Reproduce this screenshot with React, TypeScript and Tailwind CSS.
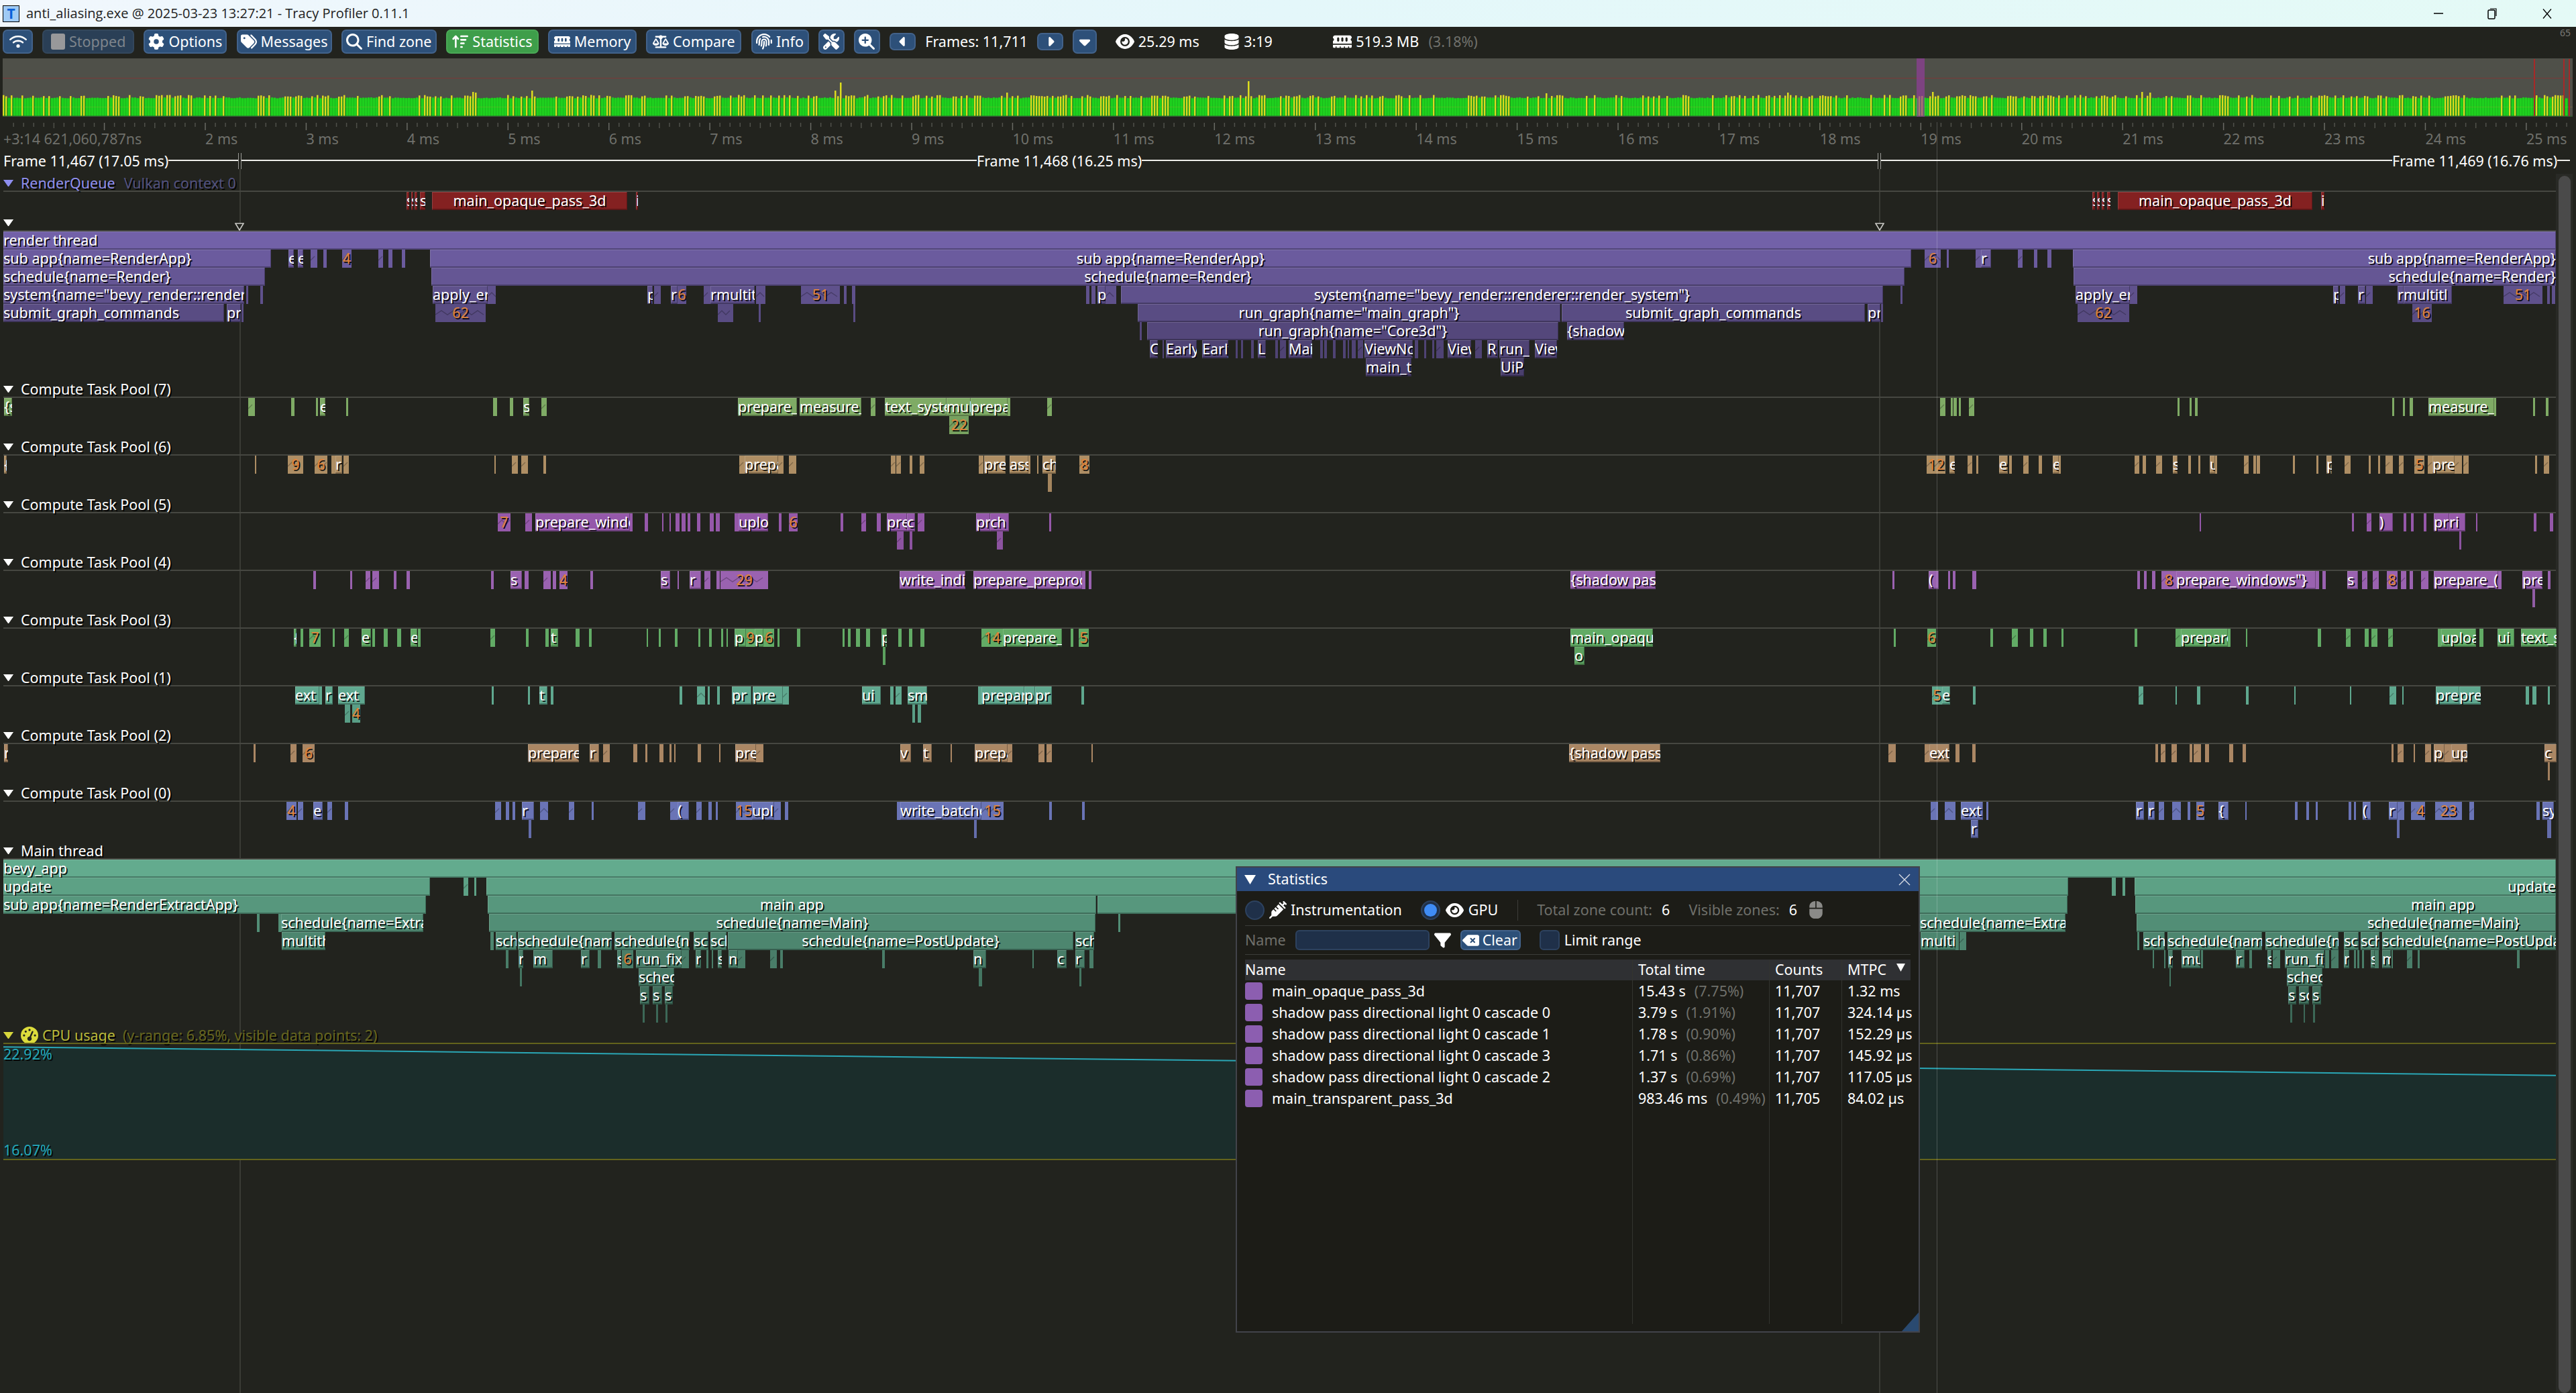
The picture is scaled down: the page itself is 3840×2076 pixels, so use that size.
// Tracy profiler window: statistics panel floating over a frame timeline.
import type { ReactNode } from "react";
import {
  FaWifi, FaGear, FaTags, FaMagnifyingGlass, FaArrowUpWideShort, FaMemory, FaScaleBalanced, FaFingerprint,
  FaScrewdriverWrench, FaMagnifyingGlassPlus, FaCaretLeft, FaCaretRight, FaCaretDown, FaEye, FaDatabase,
  FaSyringe, FaFilter, FaDeleteLeft, FaComputerMouse, FaGaugeHigh,
} from "react-icons/fa6";

const SHADOW = "[text-shadow:2px_2px_0_rgba(0,0,0,0.9)]";

type Zone = { x0: number; x1: number; label: string; align: string };

// each entry: "x0-x1[@align] label", entries split by |
function parse(s: string): Zone[] {
  return s.split("|").map((e) => {
    const m = e.match(/^(\d+)-(\d+)(?:@(\w+))? ?(.*)$/)!;
    return { x0: +m[1], x1: +m[2], align: m[3] ?? "", label: m[4] };
  });
}

function mix(hex: string, k: number) {
  const n = parseInt(hex.slice(1), 16);
  const c = [(n >> 16) & 255, (n >> 8) & 255, n & 255].map((v) => Math.round(v * k));
  return `rgb(${c[0]},${c[1]},${c[2]})`;
}

function ZoneBox({ z, color }: { z: Zone; color: string }) {
  const w = z.x1 - z.x0;
  const isNum = /^\d+$/.test(z.label);
  const folded = isNum || (!z.label && w < 120);
  const pts: string[] = [];
  if (folded && w >= 7) {
    const step = w > 40 ? 9 : 6;
    for (let i = 0, x = 0; x <= w; i++, x += step) pts.push(`${x},${i % 2 ? 10 : 16}`);
  }
  const justify = z.align === "c" || isNum ? "justify-center" : z.align === "r" ? "justify-end" : "justify-start";
  const offset = /^\d+$/.test(z.align) ? +z.align : 0;
  return (
    <div
      className={`absolute inset-y-0 flex overflow-hidden text-[21.5px] leading-[26px] ${justify} ${folded ? "" : "shadow-[inset_-1px_-2px_0_rgba(0,0,0,0.28),inset_1px_1px_0_rgba(255,255,255,0.14)]"}`}
      style={{ left: z.x0, width: w, background: color, paddingLeft: offset }}
    >
      {pts.length > 0 && (
        <svg className="absolute inset-0 h-full w-full">
          <polyline points={pts.join(" ")} fill="none" stroke="rgba(0,0,0,0.25)" strokeWidth="1.5" />
        </svg>
      )}
      {z.label && (
        <span className={`relative whitespace-nowrap ${SHADOW} ${isNum ? "text-[#e0843a]" : "text-white"}`}>{z.label}</span>
      )}
    </div>
  );
}

function Caret({ color = "#ffffff" }: { color?: string }) {
  return (
    <svg viewBox="0 0 15 10" className="ml-[5px] h-[10px] w-[15px] shrink-0">
      <polygon points="0.5,0 14.5,0 7.5,10" fill={color} stroke={color} strokeLinejoin="round" />
    </svg>
  );
}

function Track({ head, rows, base, step = 0.94 }: { head: ReactNode; rows: string[]; base: string; step?: number }) {
  return (
    <section className="pb-[5px]">
      <div className={`flex h-[25px] items-center gap-[11px] whitespace-nowrap pt-[3px] text-[21.5px] ${SHADOW}`}>{head}</div>
      <div className="ml-[5px] h-[2px] bg-[#464741]" />
      {rows.map((r, i) => (
        <div key={i} className="relative h-[27px]">
          {r &&
            parse(r).map((z, j) => <ZoneBox key={j} z={z} color={mix(base, Math.pow(step, i))} />)}
        </div>
      ))}
    </section>
  );
}

const RENDER_QUEUE =
  "606-610 s|613-616 s|618-622 s|626-634 s|644-935@c main_opaque_pass_3d|948-951 i|3119-3123 s|3126-3130 s|3133-3137 s|3141-3146 s|3157-3447@c main_opaque_pass_3d|3460-3465 i";

const RENDER_THREAD = [
  "5-3810 render thread",
  "5-404 sub app{name=RenderApp}|430-438 e|444-452 e|463-473|482-487|510-524 4|564-571|579-585|599-604|641-2849@c sub app{name=RenderApp}|2869-2893 6|2902-2905|2945-2953|2953-2968 r|3008-3015|3032-3037|3052-3058|3090-3810@r sub app{name=RenderApp}",
  "5-395 schedule{name=Render}|643-2839@c schedule{name=Render}|3091-3810@r schedule{name=Render}",
  '5-364 system{name="bevy_render::renderer::render_system"}|367-370|388-392|645-727 apply_er|727-739|965-973 p|975-985|1000-1010 r|1010-1023 6|1049-1059|1059-1125 rmultith|1127-1141|1194-1252 51|1258-1262|1270-1275|1619-1624|1627-1633|1636-1648 p|1648-1664|1671-2807@c system{name="bevy_render::renderer::render_system"}|2833-2836|3094-3175 apply_er|3175-3186|3478-3486 p|3488-3496|3515-3526 r|3527-3537|3574-3583 r|3583-3655 multitl|3732-3790 51|3797-3801|3804-3809',
  "5-334 submit_graph_commands|338-359 pr|360-363|649-724 62|1070-1093|1131-1134|1272-1275|1696-2326@c run_graph{name=\"main_graph\"}|2328-2780@c submit_graph_commands|2784-2803 pr|2804-2807|3097-3174 62|3596-3625 16",
  '1699-1702|1710-2323@c run_graph{name="Core3d"}|2336-2421 {shadow pass',
  "1714-1726 C|1733-1735|1738-1784 Early|1792-1831 Early|1842-1845|1850-1853|1865-1869|1875-1887 L|1901-1905|1908-1917|1921-1956 Main|1968-1972|1974-1978|1987-1991|2002-2006|2009-2011|2015-2021|2024-2032|2034-2106 ViewNode|2109-2114|2123-2126|2135-2138|2141-2152|2158-2193 View|2199-2209|2217-2233 R|2235-2280 run_g|2288-2321 View",
  "2036-2104 main_t|2237-2272 UiPass",
];

const POOLS: { name: string; base: string; rows: string[] }[] = [
  {
    name: "Compute Task Pool (7)",
    base: "#7fab65",
    rows: [
      "6-18 {s|370-380|434-439|471-474|477-485 e|516-519|735-741|760-765|780-789 s|807-815|1100-1188 prepare_|1192-1284 measure_|1298-1305|1319-1411 text_system|1411-1447 multi|1447-1502 prepare|1502-1506|1561-1568|2892-2900|2908-2911|2912-2917|2920-2923|2935-2943|3246-3249|3264-3267|3272-3276|3566-3569|3582-3585|3592-3597|3620-3718 measure_|3718-3721|3776-3779|3795-3799",
      "1415-1444 22",
    ],
  },
  {
    name: "Compute Task Pool (6)",
    base: "#ae8e64",
    rows: [
      "6-10 {|380-382|429-452 9|469-488 6|494-500|500-510 r|512-520|737-739|763-772|777-787|810-814|1102-1110|1110-1160 prepare|1160-1168|1176-1187|1328-1335|1336-1343|1356-1360|1371-1378|1459-1466|1467-1499 prepare|1505-1533 asset|1533-1536|1546-1548|1554-1574 check|1609-1624 8|2872-2900 12|2906-2914 e|2933-2940|2946-2949|2980-2993 e|2995-2999|3016-3024|3039-3044|3060-3069 e|3069-3072|3182-3189|3194-3199|3214-3223|3239-3246 s|3262-3266|3277-3280|3294-3302 u|3302-3305|3345-3352|3359-3363|3364-3369|3418-3421|3453-3456|3468-3476 p|3495-3504|3531-3534|3545-3548|3556-3567|3576-3583|3599-3614 5|3619-3626|3626-3659 prepare|3659-3670|3672-3680|3779-3782|3792-3800",
      "1562-1568",
    ],
  },
  {
    name: "Compute Task Pool (5)",
    base: "#9558aa",
    rows: [
      "742-761 7|783-793|798-939 prepare_windows|939-943|961-966|987-989|998-1000|1007-1013|1016-1022|1025-1029|1039-1044|1058-1064|1067-1073|1095-1101|1101-1145 upload|1161-1165|1176-1189 6|1253-1257|1284-1291|1307-1313|1322-1352 prepare|1352-1364 c|1368-1378|1455-1476 pr|1476-1504 ch|1564-1567|3279-3281|3506-3509|3528-3535|3547-3567 )|3583-3587|3594-3598|3613-3617|3628-3651 pr|3651-3675 ri|3691-3693|3777-3781|3801-3806",
      "1337-1347|1356-1360|1486-1495|3666-3669",
    ],
  },
  {
    name: "Compute Task Pool (4)",
    base: "#9a62b0",
    rows: [
      "467-471|522-525|545-552|555-565|587-591|606-611|732-736|761-778 s|782-788|810-821|824-829|834-846 4|880-884|985-999 s|1010-1012|1028-1045 r|1050-1059|1068-1073|1074-1145 29|1341-1439 write_indirect|1451-1613 prepare_preprocess|1613-1618|1623-1627|2341-2468 {shadow pass|2821-2824|2875-2890 (|2904-2907|2911-2915|2940-2946|3186-3190|3196-3200|3208-3213|3222-3244 8|3244-3452 prepare_windows\"}|3452-3457|3462-3467|3499-3515 s|3521-3529|3537-3546|3558-3574 8|3579-3587|3592-3597|3609-3620|3628-3724 prepare_(|3724-3729|3760-3790 prepare|3798-3802",
      "3775-3779",
    ],
  },
  {
    name: "Compute Task Pool (3)",
    base: "#62ab65",
    rows: [
      "438-442 {|448-452|461-478 7|496-499|513-520|539-553 e|555-559|572-578|592-598|612-622 e|623-627|731-738|784-788|813-818|821-832 t|858-864|878-882|964-966|982-985|1006-1010|1041-1044|1057-1061|1075-1078|1083-1085|1095-1112 p|1112-1125 9|1125-1138 p|1138-1154 6|1159-1162|1188-1193|1256-1259|1264-1268|1276-1282|1291-1297|1314-1322 p|1339-1344|1355-1360|1372-1378|1463-1495 14|1495-1583 prepare_|1596-1600|1608-1623 5|2341-2464 main_opaque|2823-2826|2873-2886 6|2967-2971|2999-3008|3026-3031|3046-3051|3073-3076|3182-3186|3243-3251|3251-3321 prepare|3321-3325|3348-3350|3455-3460|3497-3504|3525-3531|3535-3544|3560-3567|3634-3639|3639-3691 upload|3696-3702|3723-3748 ui|3758-3811 text_sys",
      "1316-1320|2347-2362 o",
    ],
  },
  {
    name: "Compute Task Pool (1)",
    base: "#5fa88f",
    rows: [
      "440-476 ext|476-480|485-496 r|504-544 ext|733-736|787-790|804-816 t|821-825|1013-1017|1039-1051|1055-1058|1069-1073|1091-1120 pr|1122-1167 pre|1167-1176|1285-1313 ui|1327-1332|1335-1344|1353-1382 sm|1458-1463|1463-1527 prepare|1527-1543 p|1543-1568 pr|1612-1616|2880-2895 5|2895-2907 e|2941-2945|3188-3195|3243-3245|3275-3280|3348-3352|3420-3422|3503-3505|3562-3572|3581-3583|3631-3666 prepare|3666-3698 prepare|3765-3770|3775-3781|3798-3801",
      "514-522|525-537 4|1360-1364|1368-1373",
    ],
  },
  {
    name: "Compute Task Pool (2)",
    base: "#ab8764",
    rows: [
      "6-12 r|378-381|433-442|451-469 6|787-863 prepare|879-893 r|899-909|944-950|962-965|983-989|998-1001|1005-1007|1040-1045|1072-1074|1096-1127 prepare|1127-1138|1342-1358 v|1376-1389 t|1417-1419|1453-1502 prepare|1502-1509|1548-1557|1560-1568|1627-1629|2339-2475 {shadow pass|2815-2826|2869-2876|2876-2906 ext|2915-2921|2940-2945|3213-3217|3221-3228|3237-3245|3264-3268|3270-3281|3287-3293|3323-3329|3343-3348|3565-3568|3574-3583|3598-3600|3615-3624|3628-3644 p|3644-3654|3654-3678 up|3793-3811 c",
      "3798-3801",
    ],
  },
  {
    name: "Compute Task Pool (0)",
    base: "#6a74b6",
    rows: [
      "427-442 4|444-452|467-481 e|488-495|514-519|738-747|754-759|764-768|778-796 r|805-817|848-856|882-885|951-962|999-1010|1010-1027 (|1038-1046|1056-1061|1067-1070|1097-1121 15|1121-1154 upload|1154-1164|1170-1175|1337-1342|1342-1463 write_batched|1463-1496 15|1564-1568|1613-1617|2878-2889|2899-2915|2923-2956 ext|2961-2964|3184-3196 r|3202-3212 r|3218-3226|3238-3251|3261-3265|3274-3286 5|3307-3322 {|3347-3349|3421-3425|3438-3442|3452-3455|3501-3505|3509-3512|3522-3534 (|3561-3574 r|3574-3584|3594-3602|3602-3615 4|3630-3670 23|3681-3688|3781-3786|3790-3807 sys",
      "788-792|1452-1456|2938-2949 r|3573-3577|3797-3803",
    ],
  },
];

const MAIN_THREAD = [
  "5-3810 bevy_app",
  "5-641 update|691-698|707-710|725-3083|3148-3154|3164-3168|3182-3810@r update",
  "5-635 sub app{name=RenderExtractApp}|727-1634@c main app|1636-3082|3183-3810@411 main app",
  "383-387|415-419|419-631 schedule{name=ExtractSchedule}|729-1633@c schedule{name=Main}|1667-1670|2862-3079 schedule{name=ExtractSchedule}|3185-3810@344 schedule{name=Main}",
  "420-485 multithreaded|731-736|739-770 schedule|772-912 schedule{name=|916-1028 schedule{name=|1034-1056 sch|1059-1083 sch|1085-1600@c schedule{name=PostUpdate}|1603-1631 schedule|2863-2915 multithreaded|2915-2920|2921-2931|3186-3189|3195-3227 schedule|3231-3372 schedule{name=|3377-3486 schedule{name=|3494-3516 sch|3519-3547 schedule|3551-3810 schedule{name=PostUpdate}",
  "754-758|773-780 r|795-824 m|866-879 r|891-896|920-926 s|927-944 6|948-1016 run_fixed|1016-1027|1037-1045 r|1053-1056|1061-1063|1070-1076 s|1086-1100 n|1100-1111|1148-1158|1163-1167|1315-1319|1451-1470 n|1539-1541|1576-1590 c|1603-1617 r|1624-1630|3209-3211|3226-3228|3232-3239 r|3252-3280 mu|3281-3284|3333-3346 r|3353-3357|3380-3386 s|3388-3399|3406-3465 run_fixed|3466-3472|3475-3486|3494-3502 r|3509-3512|3514-3517|3521-3524|3534-3540 s|3540-3546|3551-3564 m|3565-3567|3588-3596|3604-3607|3752-3756",
  "775-778|952-1005 schedule|1459-1464|1609-1612|3234-3236|3409-3462 schedule",
  "954-968 s|973-987 s|991-1003 s|3411-3423 s|3427-3442 sc|3447-3460 s",
  "958-961|978-981|992-995|3414-3417|3434-3436|3448-3451",
];

function FrameGraph() {
  // pseudo-random but stable column heights
  let seed = 7;
  const rnd = () => {
    seed = (seed * 16807) % 2147483647;
    return seed / 2147483647;
  };
  const spikes: Record<number, number> = { 1252: 123, 1244: 135, 792: 135, 704: 137, 708: 138, 1860: 121, 1500: 138, 2304: 139, 2880: 137, 3192: 137, 3204: 138, 2664: 138 };
  const bars = [];
  let yellow = false;
  for (let x = 4; x < 3826; x += 4) {
    yellow = rnd() < (yellow ? 0.42 : 0.38);
    const spike = spikes[x];
    const hi = yellow || spike;
    const top = spike ?? (yellow ? 144 - rnd() * 2.5 : 146.5 - rnd() * 1.5);
    bars.push(
      <rect key={x} x={x} y={top - 87} width={hi ? 2.5 : 3} height={173 - top} fill={hi ? "#dcdc1e" : "#1ed01e"} />,
      <rect key={`b${x}`} x={x + (hi ? 2.5 : 3)} y={146.5 - 87} width={hi ? 1.5 : 1} height={26.5} fill={hi ? "#18a018" : "#1bb81b"} />,
    );
  }
  return (
    <div className="h-[87px] pl-[4px] pr-[5px]">
      <svg viewBox="4 0 3831 87" className="block h-full w-full bg-[#4f5049]">
        <line x1="4" x2="3835" y1="29.5" y2="29.5" stroke="#7a3a38" strokeWidth="1" />
        {bars}
        <rect x="4" y="72" width="3831" height="1" fill="rgba(200,150,60,0.25)" />
        <rect x="4" y="85.5" width="3831" height="1.5" fill="#315c31" />
        <rect x="2857" y="0" width="12" height="87" fill="rgba(150,60,160,0.65)" />
        <rect x="3777" y="1" width="2" height="85" fill="#a82828" />
        <rect x="3821" y="1" width="2" height="85" fill="#a82828" />
        <rect x="3829" y="1" width="2" height="85" fill="#a82828" />
      </svg>
    </div>
  );
}

function Ruler() {
  const ms = (k: number) => 306 + (k - 2) * 150.43;
  const ticks = [];
  for (let i = 1; i < 255; i++) {
    const x = 5.14 + i * 15.043;
    const big = i % 10 === 0;
    ticks.push(<line key={i} x1={x} x2={x} y1="9" y2={big ? 20 : i % 5 === 0 ? 17 : 15} stroke={big ? "#6a6b65" : "#50514b"} strokeWidth="1.5" />);
  }
  const labels = [];
  for (let k = 2; k <= 25; k++) labels.push(k);
  return (
    <div className="relative h-[54px] text-[21.5px] leading-[28px] text-[#6f706b]">
      <svg className="absolute inset-0 h-full w-full">{ticks}</svg>
      <span className="absolute left-[5px] top-[19px] whitespace-nowrap">+3:14 621,060,787ns</span>
      {labels.map((k) => (
        <span key={k} className="absolute top-[19px] whitespace-nowrap" style={{ left: ms(k) }}>
          {k} ms
        </span>
      ))}
    </div>
  );
}

function FrameRow() {
  const label = "absolute top-0 whitespace-nowrap bg-[#22231e] text-[21.5px] leading-[24px] text-white";
  return (
    <div className="relative h-[24px]">
      <div className="absolute left-[5px] top-[10px] h-[2px] w-[3826px] bg-[#eeeeea]" />
      <div className="absolute left-[355px] top-0 h-[24px] w-[5px] border-x border-[#9a9a96] bg-[#22231e]" />
      <div className="absolute left-[2799px] top-0 h-[24px] w-[5px] border-x border-[#9a9a96] bg-[#22231e]" />
      <span className={`${label} left-[5px]`}>Frame 11,467 (17.05 ms)</span>
      <span className={`${label} left-[1456px]`}>Frame 11,468 (16.25 ms)</span>
      <span className={`${label} left-[3566px]`}>Frame 11,469 (16.76 ms)</span>
    </div>
  );
}

function Marker({ x }: { x: string }) {
  return (
    <svg viewBox="0 0 14 12" className={`absolute top-[332px] h-[12px] w-[14px] ${x}`}>
      <polygon points="1,1 13,1 7,11" fill="#22231e" stroke="#c8c8c4" strokeWidth="1.6" />
    </svg>
  );
}

function CpuPlot() {
  return (
    <section>
      <div className={`flex h-[25px] items-center whitespace-nowrap pt-[3px] text-[21.5px] ${SHADOW}`}>
        <Caret color="#d8d83c" />
        <FaGaugeHigh className="ml-[11px] text-[26px] text-[#dcdc3c]" />
        <span className="ml-[6px] text-[#b8b83a]">CPU usage</span>
        <span className="ml-[11px] text-[#66661f]">(y-range: 6.85%, visible data points: 2)</span>
      </div>
      <div className="relative ml-[5px] h-[175px] border-y-2 border-[#63631c]">
        <svg viewBox="5 1556 3805 172" preserveAspectRatio="none" className="absolute inset-0 h-full w-full">
          <polygon points="5,1560 3810,1603 3810,1728 5,1728" fill="#1b2d2b" />
          <line x1="5" y1="1560.2" x2="3810" y2="1603" stroke="#2aa7b6" strokeWidth="2" />
        </svg>
        <span className={`absolute left-0 top-[1px] text-[21.5px] leading-[28px] text-[#22a8ba] ${SHADOW}`}>22.92%</span>
        <span className={`absolute bottom-[-1px] left-0 text-[21.5px] leading-[28px] text-[#22a8ba] ${SHADOW}`}>16.07%</span>
      </div>
    </section>
  );
}

function TopButton({ w, icon, children, active, off }: { w: string; icon?: ReactNode; children?: ReactNode; active?: boolean; off?: boolean }) {
  const tone = active
    ? "border-[#4aa856] bg-[#3e9e4a] text-white"
    : off
      ? "border-[#33475c] bg-[#2a3f56] text-[#7e858c]"
      : "border-[#42628a] bg-[#2d5079] text-white";
  return (
    <button className={`flex h-[36px] shrink-0 items-center justify-center gap-[6px] rounded-[7px] border-2 ${tone} ${w}`}>
      {icon}
      {children}
    </button>
  );
}

function Toolbar() {
  const small = "flex h-[26px] w-[39px] shrink-0 items-center justify-center rounded-[7px] border-2 border-[#42628a] bg-[#2d5079] text-white";
  return (
    <div className="relative flex h-[47px] items-center gap-[14.2px] pl-[4px] pb-[7px] pt-[4px] text-[21.5px] text-white">
      <TopButton w="w-[45px]" icon={<FaWifi className="text-[26px]" />} />
      <TopButton w="w-[137px]" off icon={<span className="h-[24px] w-[21px] rounded-[3px] bg-[#98989a]" />}>Stopped</TopButton>
      <TopButton w="w-[124px]" icon={<FaGear className="text-[24px]" />}>Options</TopButton>
      <TopButton w="w-[142px]" icon={<FaTags className="text-[24px]" />}>Messages</TopButton>
      <TopButton w="w-[142px]" icon={<FaMagnifyingGlass className="text-[24px]" />}>Find zone</TopButton>
      <TopButton w="w-[138px]" active icon={<FaArrowUpWideShort className="text-[24px]" />}>Statistics</TopButton>
      <TopButton w="w-[132px]" icon={<FaMemory className="text-[24px]" />}>Memory</TopButton>
      <TopButton w="w-[142px]" icon={<FaScaleBalanced className="text-[24px]" />}>Compare</TopButton>
      <TopButton w="w-[86px]" icon={<FaFingerprint className="text-[24px]" />}>Info</TopButton>
      <TopButton w="w-[39px]" icon={<FaScrewdriverWrench className="text-[24px]" />} />
      <TopButton w="w-[39px]" icon={<FaMagnifyingGlassPlus className="text-[24px]" />} />
      <button className={small}><FaCaretLeft className="text-[22px]" /></button>
      <span className="whitespace-nowrap">Frames: 11,711</span>
      <button className={small}><FaCaretRight className="text-[22px]" /></button>
      <TopButton w="w-[36px]" icon={<FaCaretDown className="text-[26px]" />} />
      <FaEye className="ml-[13px] text-[28px]" />
      <span className="-ml-[8px] whitespace-nowrap">25.29 ms</span>
      <FaDatabase className="ml-[22px] text-[24px]" />
      <span className="-ml-[8px] whitespace-nowrap">3:19</span>
      <FaMemory className="ml-[76px] text-[28px]" />
      <span className="-ml-[8px] whitespace-nowrap">519.3 MB</span>
      <span className="whitespace-nowrap text-[#6f706b]">(3.18%)</span>
      <span className="absolute right-[8px] top-[1px] text-[14px] leading-[16px] text-[#7a7a76]">65</span>
    </div>
  );
}

function TitleBar() {
  return (
    <header className="flex h-[40px] items-center bg-gradient-to-r from-[#f1f7fd] via-[#e4f7fa] to-[#e4faf6] pl-[4px] font-['Open_Sans',sans-serif] text-black">
      <div className="flex h-[25px] w-[25px] items-center justify-center border-[1.5px] border-black bg-[#9fcaf5] text-[21px] font-bold leading-none text-[#0a60d8]">
        T
      </div>
      <span className="ml-[10px] whitespace-nowrap text-[20px] text-[#222]">anti_aliasing.exe @ 2025-03-23 13:27:21 - Tracy Profiler 0.11.1</span>
      <div className="ml-auto flex items-center">
        <svg viewBox="0 0 14 14" className="h-[14px] w-[14px]"><line x1="0" x2="14" y1="7" y2="7" stroke="#000" strokeWidth="1.5" /></svg>
        <svg viewBox="0 0 14 18" className="ml-[66px] h-[18px] w-[14px]">
          <rect x="1" y="4" width="10" height="13" rx="1.5" fill="none" stroke="#000" strokeWidth="1.5" />
          <path d="M4 2 H13 V13" fill="none" stroke="#000" strokeWidth="1.2" />
        </svg>
        <svg viewBox="0 0 14 14" className="ml-[68px] mr-[36px] h-[15px] w-[14px]"><path d="M1 0 L13 14 M13 0 L1 14" stroke="#000" strokeWidth="1.3" /></svg>
      </div>
    </header>
  );
}

const STATS: [string, string, string, string, string][] = [
  ["main_opaque_pass_3d", "15.43 s", "(7.75%)", "11,707", "1.32 ms"],
  ["shadow pass directional light 0 cascade 0", "3.79 s", "(1.91%)", "11,707", "324.14 µs"],
  ["shadow pass directional light 0 cascade 1", "1.78 s", "(0.90%)", "11,707", "152.29 µs"],
  ["shadow pass directional light 0 cascade 3", "1.71 s", "(0.86%)", "11,707", "145.92 µs"],
  ["shadow pass directional light 0 cascade 2", "1.37 s", "(0.69%)", "11,707", "117.05 µs"],
  ["main_transparent_pass_3d", "983.46 ms", "(0.49%)", "11,705", "84.02 µs"],
];

function Radio({ on }: { on?: boolean }) {
  return (
    <span className="flex h-[29px] w-[29px] shrink-0 items-center justify-center rounded-full border-2 border-[#2d425f] bg-[#1f3049]">
      {on && <span className="h-[19px] w-[19px] rounded-full bg-[#3f8cf5]" />}
    </span>
  );
}

function StatsWindow() {
  const head = "flex h-[31px] items-center bg-[#2f3033] pl-2";
  const cell = "flex h-[32px] items-center gap-[13px] whitespace-nowrap pl-2";
  return (
    <div className="absolute left-[1842px] top-[1291px] z-20 flex h-[695px] w-[1020px] flex-col border-2 border-[#42434a] bg-[#1c1c17] text-[21.5px] text-white">
      <div className="flex h-[35px] shrink-0 items-center bg-[#2a4a7c] pl-[11px] pr-[12px]">
        <svg viewBox="0 0 17 14" className="h-[14px] w-[17px]"><polygon points="0,0 17,0 8.5,14" fill="#fff" /></svg>
        <span className="ml-[18px]">Statistics</span>
        <svg viewBox="0 0 18 18" className="ml-auto h-[18px] w-[18px]"><path d="M1 1 L17 17 M17 1 L1 17" stroke="#d8dce4" strokeWidth="1.4" /></svg>
      </div>
      <div className="flex min-h-0 flex-1 flex-col px-[12px]">
        <div className="flex h-[52px] shrink-0 items-center border-b border-[#3c3d39] pt-[5px]">
          <Radio />
          <FaSyringe className="ml-[7px] text-[26px]" />
          <span className="ml-[6px]">Instrumentation</span>
          <span className="ml-[28px]"><Radio on /></span>
          <FaEye className="ml-[8px] text-[27px]" />
          <span className="ml-[7px]">GPU</span>
          <span className="ml-[29px] h-[31px] w-px bg-[#3c3d39]" />
          <span className="ml-[28px] text-[#6f706b]">Total zone count:</span>
          <span className="ml-[14px]">6</span>
          <span className="ml-[28px] text-[#6f706b]">Visible zones:</span>
          <span className="ml-[14px]">6</span>
          <FaComputerMouse className="ml-[15px] text-[26px] text-[#8a8a88]" />
        </div>
        <div className="flex h-[43px] shrink-0 items-center border-b border-[#3c3d39]">
          <span className="text-[#6f706b]">Name</span>
          <span className="ml-[14px] h-[30px] w-[200px] rounded-[6px] border-2 border-[#2d425f] bg-[#1f3049]" />
          <FaFilter className="ml-[7px] text-[25px]" />
          <button className="ml-[14px] flex h-[30px] w-[90px] items-center gap-[5px] rounded-[6px] border-2 border-[#42628a] bg-[#2d5079] pl-[1px]">
            <FaDeleteLeft className="text-[25px]" />
            Clear
          </button>
          <span className="ml-[28px] h-[30px] w-[30px] rounded-[6px] border-2 border-[#2d425f] bg-[#1f3049]" />
          <span className="ml-[7px]">Limit range</span>
        </div>
        <div className="mb-[11px] mt-[7px] flex min-h-0 flex-1">
          <div className="w-[577px]">
            <div className="flex h-[31px] items-center bg-[#2f3033]">Name</div>
            {STATS.map((r) => (
              <div key={r[0]} className="flex h-[32px] items-center gap-[14px] whitespace-nowrap">
                <span className="h-[26px] w-[26px] rounded-[4px] bg-[#8c5eb0]" />
                {r[0]}
              </div>
            ))}
          </div>
          <div className="w-[204px] border-l border-[#33342f]">
            <div className={head}>Total time</div>
            {STATS.map((r) => (
              <div key={r[0]} className={cell}>
                <span>{r[1]}</span>
                <span className="text-[#6f706b]">{r[2]}</span>
              </div>
            ))}
          </div>
          <div className="w-[108px] border-l border-[#33342f]">
            <div className={head}>Counts</div>
            {STATS.map((r) => (
              <div key={r[0]} className={cell}>{r[3]}</div>
            ))}
          </div>
          <div className="w-[103px] border-l border-[#33342f]">
            <div className={`${head} relative`}>
              MTPC
              <svg viewBox="0 0 13 12" className="absolute right-[8px] top-[6px] h-[12px] w-[13px]"><polygon points="0,0 13,0 6.5,12" fill="#fff" /></svg>
            </div>
            {STATS.map((r) => (
              <div key={r[0]} className={cell}>{r[4]}</div>
            ))}
          </div>
        </div>
      </div>
      <svg viewBox="0 0 25 28" className="absolute bottom-0 right-0 h-[28px] w-[25px]"><polygon points="25,0 25,28 0,28" fill="#2a4a70" /></svg>
    </div>
  );
}

export default function App() {
  return (
    <div className="relative flex h-[2076px] w-[3840px] flex-col overflow-hidden bg-[#22231e] font-['Noto_Sans',sans-serif]">
      <TitleBar />
      <Toolbar />
      <FrameGraph />
      <main className="relative min-h-0 flex-1">
        {/* frame boundaries run behind the zones, the mouse line over them */}
        <div className="absolute bottom-0 left-[356.5px] top-[78px] w-[2px] bg-[#3a3b35]" />
        <div className="absolute bottom-0 left-[2801px] top-[78px] w-[2px] bg-[#3a3b35]" />
        <Ruler />
        <FrameRow />
        <div className="mt-[7px] flex h-[1817px]">
          <div className="relative w-[3810px] shrink-0">
            <Track
              rows={[RENDER_QUEUE]}
              base="#842121"
              head={
                <>
                  <Caret color="#8f8fef" />
                  <span>
                    <span className="text-[#9090ee]">RenderQueue</span>
                    <span className="ml-[13px] text-[#52527f]">Vulkan context 0</span>
                  </span>
                </>
              }
            />
            <Track rows={RENDER_THREAD} base="#7261a8" head={<Caret />} />
            {POOLS.map((p) => (
              <Track
                key={p.name}
                rows={p.rows}
                base={p.base}
                head={
                  <>
                    <Caret />
                    <span className="text-white">{p.name}</span>
                  </>
                }
              />
            ))}
            <Track
              rows={MAIN_THREAD}
              base="#63ab8e"
              head={
                <>
                  <Caret />
                  <span className="text-white">Main thread</span>
                </>
              }
            />
            <CpuPlot />
          </div>
          <div className="h-full w-[25px] bg-[#292a26] px-[4px] pt-[3px]">
            <div className="h-full w-[18px] rounded-full bg-[#4a4a4a]" />
          </div>
        </div>
        <div className="absolute bottom-0 left-[2887px] top-[8px] z-10 w-px bg-white/20" />
      </main>
      <Marker x="left-[350px]" />
      <Marker x="left-[2795px]" />
      <StatsWindow />
    </div>
  );
}
